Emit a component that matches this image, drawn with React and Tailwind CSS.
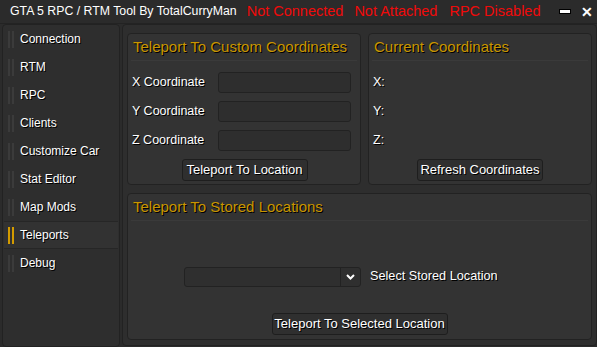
import React from "react";

const font = { fontFamily: '"Liberation Sans", Arial, sans-serif' };

function NavItem({ label, active }) {
  return (
    <div
      className={
        "h-[28px] flex items-center mx-[1px] " +
        (active ? "bg-[#323232] border-y border-[#262626]" : "")
      }
    >
      <div className="flex gap-[2px] ml-[4px]">
        <div className={"w-[2px] h-[17px] " + (active ? "bg-[#d39b00]" : "bg-[#3b3b3b]")} />
        <div className={"w-[2px] h-[17px] " + (active ? "bg-[#d39b00]" : "bg-[#3b3b3b]")} />
      </div>
      <span className="ml-[6px] text-[12px] text-white [text-shadow:1px_1px_0_#000]">{label}</span>
    </div>
  );
}

function Panel({ title, className, children }) {
  return (
    <div className={"bg-[#333333] border border-[#222222] rounded-[4px] flex flex-col " + className}>
      <div className="h-[25px] flex items-end px-[5px] pb-[1px]">
        <span className="text-[15px] text-[#c99600] [text-shadow:1px_1px_0_#000]">{title}</span>
      </div>
      <div className="mx-[3px] mt-[1px] h-px bg-[#262626] border-b border-[#3a3a3a]" />
      {children}
    </div>
  );
}

function Btn({ children, className }) {
  return (
    <div
      className={
        "h-[22px] flex items-center justify-center bg-[#2f2f2f] border border-[#1e1e1e] rounded-[3px] text-[13px] text-white [text-shadow:1px_1px_0_#000] " +
        className
      }
    >
      {children}
    </div>
  );
}

function Input() {
  return <div className="w-[133px] h-[21px] bg-[#2e2e2e] border border-[#222222] rounded-[3px]" />;
}

export default function App() {
  const items = ["Connection", "RTM", "RPC", "Clients", "Customize Car", "Stat Editor", "Map Mods", "Teleports", "Debug"];
  return (
    <div className="w-[597px] h-[347px] bg-[#2b2b2b] flex flex-col overflow-hidden" style={font}>
      <div className="h-[24px] flex items-center border-b border-[#232323] pl-[10px] shrink-0">
        <span className="text-[12.3px] text-white">GTA 5 RPC / RTM Tool By TotalCurryMan</span>
        <span className="ml-[10px] text-[14.5px] text-[#f00a0a]">Not Connected</span>
        <span className="ml-[11px] text-[14.5px] text-[#f00a0a]">Not Attached</span>
        <span className="ml-[12px] text-[14.5px] text-[#f00a0a]">RPC Disabled</span>
        <div className="ml-auto mr-[10px] w-[12px] h-[5px] bg-white border border-black" />
        <span className="mr-[4px] text-[14px] font-bold text-white leading-none">✕</span>
      </div>
      <div className="flex-1 flex pl-[2px]">
        <div className="w-[118px] h-full bg-[#2e2e2e] border border-[#222222] rounded-[4px] shrink-0">
          {items.map((it) => (
            <NavItem key={it} label={it} active={it === "Teleports"} />
          ))}
        </div>
        <div className="flex-1 ml-[2px] mb-[1px] bg-[#2e2e2e] border border-[#222222] rounded-[4px] pt-[8px] px-[4px] pb-[5px] flex flex-col gap-[8px]">
          <div className="flex gap-[7px]">
            <Panel title="Teleport To Custom Coordinates" className="w-[234px] h-[152px]">
              <div className="flex flex-col gap-[8px] mt-[11px] px-[4px]">
                {["X", "Y", "Z"].map((c) => (
                  <div key={c} className="flex items-center">
                    <span className="w-[86px] text-[12.5px] text-white [text-shadow:1px_1px_0_#000]">{c} Coordinate</span>
                    <Input />
                  </div>
                ))}
              </div>
              <div className="flex justify-center mt-[8px]">
                <Btn className="w-[126px] ml-[1px]">Teleport To Location</Btn>
              </div>
            </Panel>
            <Panel title="Current Coordinates" className="flex-1 h-[152px]">
              <div className="flex flex-col gap-[8px] mt-[11px] px-[4px]">
                {["X:", "Y:", "Z:"].map((c) => (
                  <div key={c} className="h-[21px] flex items-center">
                    <span className="text-[12.5px] text-white [text-shadow:1px_1px_0_#000]">{c}</span>
                  </div>
                ))}
              </div>
              <div className="flex justify-center mt-[8px]">
                <Btn className="w-[126px]">Refresh Coordinates</Btn>
              </div>
            </Panel>
          </div>
          <Panel title="Teleport To Stored Locations" className="flex-1">
            <div className="flex items-center mt-[46px] pl-[56px]">
              <div className="w-[177px] h-[20px] bg-[#2f2f2f] border border-[#222222] rounded-[3px] flex">
                <div className="flex-1" />
                <div className="w-[20px] border-l border-[#222222] flex items-center justify-center">
                  <svg width="9" height="6" viewBox="0 0 9 6">
                    <path d="M1 1 L4.5 4.5 L8 1" stroke="white" strokeWidth="2" fill="none" />
                  </svg>
                </div>
              </div>
              <span className="ml-[9px] text-[12.7px] text-white [text-shadow:1px_1px_0_#000]">Select Stored Location</span>
            </div>
            <div className="flex justify-center mt-[26px]">
              <Btn className="w-[176px]">Teleport To Selected Location</Btn>
            </div>
          </Panel>
        </div>
      </div>
    </div>
  );
}
